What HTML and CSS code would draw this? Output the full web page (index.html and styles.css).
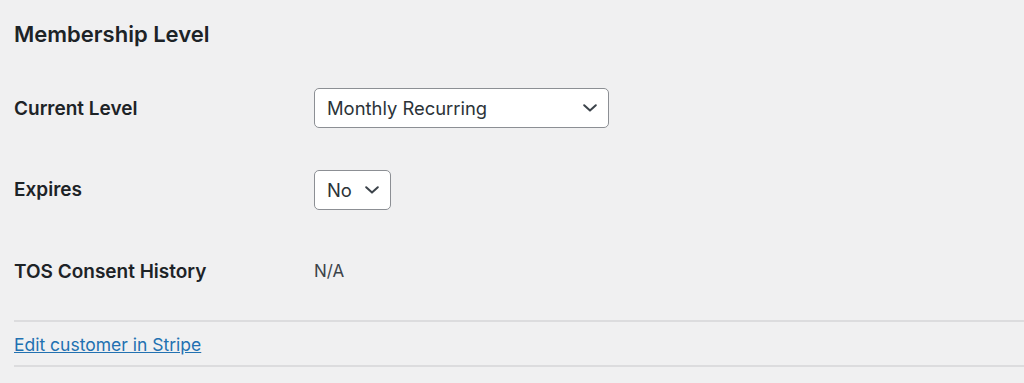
FILE: index.html
```html
<!DOCTYPE html>
<html lang="en">
<head>
<meta charset="utf-8">
<title>Membership Level</title>
<link rel="stylesheet" href="styles.css">
</head>
<body>
<div class="wrap">
  <h2 class="title">Membership Level</h2>
  <div class="form">
    <div class="label">Current Level</div>
    <div class="field">
      <div class="select select-wide">
        <span class="value">Monthly Recurring</span>
        <svg class="chev" width="14" height="8" viewBox="0 0 14 8"><path d="M1.2 1.2 L7 6.6 L12.8 1.2" fill="none" stroke="#3c434a" stroke-width="2" stroke-linecap="round" stroke-linejoin="round"/></svg>
      </div>
    </div>
    <div class="label">Expires</div>
    <div class="field">
      <div class="select select-small">
        <span class="value">No</span>
        <svg class="chev" width="14" height="8" viewBox="0 0 14 8"><path d="M1.2 1.2 L7 6.6 L12.8 1.2" fill="none" stroke="#3c434a" stroke-width="2" stroke-linecap="round" stroke-linejoin="round"/></svg>
      </div>
    </div>
    <div class="label">TOS Consent History</div>
    <div class="field"><span class="plain">N/A</span></div>
  </div>
  <div class="links">
    <a class="link" href="#">Edit customer in Stripe</a>
  </div>
</div>
</body>
</html>
```
FILE: styles.css
```css
html, body {
  margin: 0;
  padding: 0;
  background: #f0f0f1;
}
body {
  font-family: Inter, "Noto Sans", "Liberation Sans", sans-serif;
  color: #1d2327;
}
.wrap {
  padding-left: 14px;
  padding-top: 19px;
}
.title {
  margin: 0;
  font-size: 22px;
  font-weight: 600;
  line-height: 30px;
  color: #1d2327;
}
.form {
  display: grid;
  grid-template-columns: 300px 1fr;
  grid-auto-rows: 81.5px;
  align-items: center;
  margin-top: 18.5px;
}
.label {
  font-size: 19px;
  font-weight: 600;
  color: #1d2327;
}
.field {
  display: flex;
  align-items: center;
}
.select {
  box-sizing: border-box;
  height: 40px;
  background: #fff;
  border: 1px solid #8c8f94;
  border-radius: 5px;
  display: flex;
  align-items: center;
  justify-content: space-between;
  padding: 0 11px 0 12px;
  font-size: 18.4px;
  color: #2c3338;
}
.select-wide { width: 295px; }
.select-small { width: 77px; }
.chev { display: block; }
.plain {
  font-size: 17px;
  color: #3c434a;
}
.links {
  margin-top: 8px;
  border-top: 2px solid #dcdcde;
  border-bottom: 2px solid #dcdcde;
  padding: 12px 0 9px;
}
.link {
  font-size: 17.5px;
  color: #2271b1;
  text-decoration: underline;
  line-height: 22px;
}
```
